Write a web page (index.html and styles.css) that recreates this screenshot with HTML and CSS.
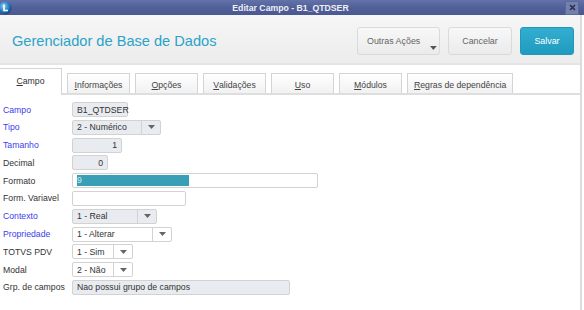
FILE: index.html
```html
<!DOCTYPE html>
<html lang="pt-BR">
<head>
    <meta charset="UTF-8">
    <title>Editar Campo - B1_QTDSER</title>
    <link rel="stylesheet" href="styles.css">
</head>
<body>
    <div class="titlebar">
        <svg class="app-icon" width="14" height="14" viewBox="0 0 14 14">
            <defs>
                <radialGradient id="ball" cx="40%" cy="35%" r="65%">
                    <stop offset="0" stop-color="#8fd0f5"/>
                    <stop offset="0.6" stop-color="#2a7fc4"/>
                    <stop offset="1" stop-color="#17457e"/>
                </radialGradient>
            </defs>
            <circle cx="7" cy="7" r="6.5" fill="url(#ball)"/>
            <path d="M6 3.5 L6 9.5 L10 9.5" fill="none" stroke="#fff" stroke-width="1.6"/>
        </svg>
        <div class="titlebar-text">Editar Campo - B1_QTDSER</div>
        <div class="close-btn">
            <svg width="7" height="7" viewBox="0 0 7 7">
                <path d="M1 1 L6 6 M6 1 L1 6" stroke="#2b2f45" stroke-width="1.6"/>
            </svg>
        </div>
    </div>

    <div class="window">
        <div class="header">
            <h1 class="page-title">Gerenciador de Base de Dados</h1>
            <div class="actions">
                <button class="btn btn-more">
                    <span>Outras Ações</span>
                    <svg class="caret" width="7" height="4" viewBox="0 0 7 4"><path d="M0 0 L7 0 L3.5 4 Z" fill="#555"/></svg>
                </button>
                <button class="btn btn-cancel">Cancelar</button>
                <button class="btn btn-primary">Salvar</button>
            </div>
        </div>

        <div class="tabs">
            <div class="tab active"><u>C</u>ampo</div>
            <div class="tab"><u>I</u>nformações</div>
            <div class="tab"><u>O</u>pções</div>
            <div class="tab"><u>V</u>alidações</div>
            <div class="tab"><u>U</u>so</div>
            <div class="tab"><u>M</u>ódulos</div>
            <div class="tab"><u>R</u>egras de dependência</div>
        </div>

        <div class="panel">
            <div class="form-row">
                <label class="req">Campo</label>
                <div class="field readonly w-campo">B1_QTDSER</div>
            </div>
            <div class="form-row">
                <label class="req">Tipo</label>
                <div class="select readonly w-tipo">
                    <span class="select-value">2 - Numérico</span>
                    <span class="select-arrow"><svg width="7" height="4" viewBox="0 0 7 4"><path d="M0 0 L7 0 L3.5 4 Z" fill="#666"/></svg></span>
                </div>
            </div>
            <div class="form-row">
                <label class="req">Tamanho</label>
                <div class="field readonly number w-tamanho">1</div>
            </div>
            <div class="form-row">
                <label>Decimal</label>
                <div class="field readonly number w-decimal">0</div>
            </div>
            <div class="form-row">
                <label>Formato</label>
                <div class="field w-formato"><span class="selection">9</span></div>
            </div>
            <div class="form-row">
                <label>Form. Variavel</label>
                <div class="field w-variavel"></div>
            </div>
            <div class="form-row">
                <label class="req">Contexto</label>
                <div class="select readonly w-contexto">
                    <span class="select-value">1 - Real</span>
                    <span class="select-arrow"><svg width="7" height="4" viewBox="0 0 7 4"><path d="M0 0 L7 0 L3.5 4 Z" fill="#666"/></svg></span>
                </div>
            </div>
            <div class="form-row">
                <label class="req">Propriedade</label>
                <div class="select w-propriedade">
                    <span class="select-value">1 - Alterar</span>
                    <span class="select-arrow"><svg width="7" height="4" viewBox="0 0 7 4"><path d="M0 0 L7 0 L3.5 4 Z" fill="#666"/></svg></span>
                </div>
            </div>
            <div class="form-row">
                <label>TOTVS PDV</label>
                <div class="select w-small">
                    <span class="select-value">1 - Sim</span>
                    <span class="select-arrow"><svg width="7" height="4" viewBox="0 0 7 4"><path d="M0 0 L7 0 L3.5 4 Z" fill="#666"/></svg></span>
                </div>
            </div>
            <div class="form-row">
                <label>Modal</label>
                <div class="select w-small">
                    <span class="select-value">2 - Não</span>
                    <span class="select-arrow"><svg width="7" height="4" viewBox="0 0 7 4"><path d="M0 0 L7 0 L3.5 4 Z" fill="#666"/></svg></span>
                </div>
            </div>
            <div class="form-row">
                <label>Grp. de campos</label>
                <div class="field readonly w-grupo">Nao possui grupo de campos</div>
            </div>
        </div>
    </div>
</body>
</html>
```

FILE: styles.css
```css
body {
    margin: 0;
    padding: 0;
    width: 584px;
    height: 310px;
    overflow: hidden;
    font-family: "Liberation Sans", Arial, sans-serif;
    font-size: 8.7px;
    color: #333;
    background: #fff;
}

/* window title bar */
.titlebar {
    height: 15px;
    display: flex;
    align-items: center;
    background: linear-gradient(to bottom, #6472a9 0%, #52609a 50%, #4a5790 100%);
}

.app-icon {
    margin-left: -2px;
    flex: none;
}

.titlebar-text {
    flex: 1;
    text-align: center;
    color: #eef0f6;
    font-weight: bold;
    padding-left: 4px;
}

.close-btn {
    width: 12px;
    height: 12px;
    margin-right: 5px;
    background: #7480b0;
    border: 1px solid #5c6898;
    display: flex;
    align-items: center;
    justify-content: center;
}

.window {
    width: 580px;
    border-right: 2px solid #dcdcdc;
}

/* header */
.header {
    height: 50px;
    box-sizing: border-box;
    padding: 4px 6px 0 12px;
    display: flex;
    align-items: center;
    justify-content: space-between;
    background: linear-gradient(to bottom, #f6f6f6 0%, #ececec 100%);
    border-bottom: 2px solid #e4e4e4;
}

.page-title {
    margin: 0;
    font-size: 14.6px;
    font-weight: normal;
    color: #2ba3c8;
}

.actions {
    display: flex;
    gap: 8px;
}

.btn {
    height: 28px;
    box-sizing: border-box;
    border: 1px solid #dadada;
    border-radius: 3px;
    background: linear-gradient(to bottom, #f8f8f8 0%, #ebebeb 100%);
    font-family: inherit;
    font-size: 8.9px;
    color: #666;
    padding: 0;
    white-space: nowrap;
}

.btn-more {
    width: 83px;
    display: flex;
    align-items: center;
    padding: 0 2px 0 9px;
    gap: 10px;
}

.btn-more .caret {
    align-self: flex-end;
    margin-bottom: 4px;
}

.btn-cancel {
    width: 64px;
}

.btn-primary {
    width: 54px;
    border-color: #2397b8;
    background: linear-gradient(to bottom, #33aed0 0%, #1f9bbf 100%);
    color: #fff;
}

/* tabs */
.tabs {
    height: 28px;
    display: flex;
    align-items: flex-end;
    gap: 5px;
    position: relative;
    z-index: 1;
}

.tab {
    min-width: 63px;
    height: 20px;
    box-sizing: border-box;
    padding: 2px 6px 0;
    display: flex;
    align-items: center;
    justify-content: center;
    border: 1px solid #d4d4d4;
    border-bottom: none;
    background: linear-gradient(to bottom, #ffffff 0%, #f1f1f1 100%);
    color: #444;
    white-space: nowrap;
}

.tab.active {
    height: 27px;
    margin-bottom: -2px;
    margin-left: -1px;
    padding-top: 0;
    padding-bottom: 2px;
    background: #fff;
    color: #333;
}

/* form panel */
.panel {
    height: 220px;
    border-top: 2px solid #dedede;
    padding-top: 7px;
    display: flex;
    flex-direction: column;
    gap: 2.8px;
}

.form-row {
    display: flex;
    align-items: center;
    height: 15px;
}

.form-row label {
    width: 69px;
    padding-left: 3px;
    flex: none;
    color: #333;
}

.form-row label.req {
    color: #3d3ded;
}

.field,
.select {
    height: 15px;
    box-sizing: border-box;
    border: 1px solid #d2d2d2;
    border-radius: 2px;
    background: #fff;
    display: flex;
    align-items: center;
    color: #333;
}

.field {
    padding: 0 4px;
}

.readonly {
    background: #e8ebef;
}

.number {
    justify-content: flex-end;
}

.select-value {
    flex: 1;
    padding-left: 4px;
}

.select-arrow {
    width: 18px;
    height: 100%;
    border-left: 1px solid #d2d2d2;
    display: flex;
    align-items: center;
    justify-content: center;
}

.selection {
    display: block;
    width: 112px;
    height: 11px;
    line-height: 11px;
    background: #389fb6;
    color: #cfe9ef;
}

.w-campo { width: 56px; }
.w-tipo { width: 89px; }
.w-tamanho { width: 50px; }
.w-decimal { width: 36px; }
.w-formato { width: 246px; padding-left: 4px; }
.w-variavel { width: 114px; }
.w-contexto { width: 85px; }
.w-propriedade { width: 100px; }
.w-small { width: 61px; }
.w-grupo { width: 218px; }
```
